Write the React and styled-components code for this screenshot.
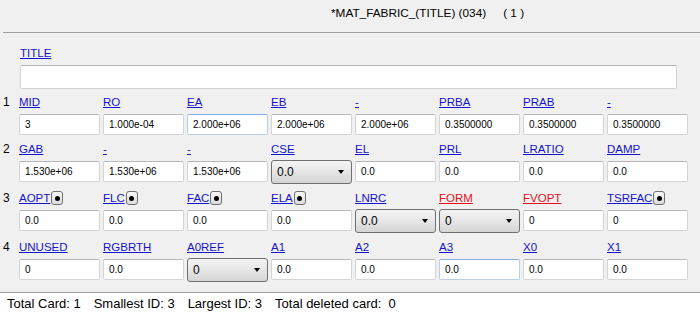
import React from 'react'
import styled, { createGlobalStyle } from 'styled-components'

const GlobalStyle = createGlobalStyle`
    body {
        margin: 0;
        background: #f0f0f0;
        font-family: "Liberation Sans", Arial, sans-serif;
    }
`

const Page = styled.div`
    width: 700px;
    height: 315px;
    overflow: hidden;
    display: flex;
    flex-direction: column;
`

const Header = styled.div`
    height: 33px;
    box-sizing: border-box;
    margin-left: 3px;
    padding: 5px 0 0 328px;
    border-bottom: 1px solid #a0a0a0;
    font-size: 11.8px;
    line-height: 16px;
    color: #000;
    white-space: pre;
`

const Count = styled.span`
    margin-left: 17px;
`

const TitleBlock = styled.div`
    padding: 10px 0 0 20px;
`

const LabelRow = styled.div`
    display: flex;
    align-items: center;
    gap: 1px;
    height: 20px;
    margin-bottom: 2px;
`

const FieldLabel = styled.a`
    color: ${props => props.$red ? '#e2101c' : '#1414c8'};
    text-decoration: underline;
    font-size: 11.5px;
    line-height: 20px;
    cursor: pointer;
`

const Toggle = styled.span`
    width: 12px;
    height: 14px;
    box-sizing: border-box;
    border: 1px solid #707070;
    border-radius: 3px;
    background: linear-gradient(#f8f8f8, #dcdcdc);
    display: flex;
    align-items: center;
    justify-content: center;

    &::after {
        content: '';
        width: 5px;
        height: 5px;
        border-radius: 50%;
        background: #000;
    }
`

const TitleInput = styled.input`
    width: 657px;
    height: 24px;
    box-sizing: border-box;
    border: 1px solid #d2d2d2;
    border-top-color: #b4b4b4;
    border-radius: 2px;
    background: #fff;
    outline: none;
`

const Grid = styled.div`
    display: flex;
    flex-direction: column;
    gap: 4px;
    margin-top: 3px;
`

const Row = styled.div`
    display: flex;
    align-items: flex-start;
`

const RowNum = styled.div`
    width: 19px;
    box-sizing: border-box;
    padding-left: 3px;
    font-size: 12px;
    line-height: 20px;
    color: #000;
`

const Cells = styled.div`
    display: grid;
    grid-template-columns: repeat(8, 81px);
    column-gap: 3px;
`

const Cell = styled.div`
    display: flex;
    flex-direction: column;
`

const Input = styled.input`
    width: 81px;
    height: 21px;
    box-sizing: border-box;
    padding: 0 5px;
    border: 1px solid ${props => props.$active ? '#b7d0e8' : '#d4d4d4'};
    border-top-color: ${props => props.$active ? '#86aee0' : '#b6b6b6'};
    border-radius: 2px;
    background: #fff;
    font-family: "Liberation Sans", Arial, sans-serif;
    font-size: 10px;
    color: #000;
    outline: none;
`

const Combo = styled.div`
    width: 81px;
    height: 24px;
    margin-top: -1px;
    box-sizing: border-box;
    padding-left: 5px;
    border: 1px solid #707070;
    border-radius: 3px;
    background: linear-gradient(#f4f4f4, #e6e6e6 50%, #d4d4d4);
    display: flex;
    align-items: center;
    justify-content: space-between;
    font-size: 12px;
    color: #000;

    &::after {
        content: '';
        margin-right: 7px;
        border-left: 3.5px solid transparent;
        border-right: 3.5px solid transparent;
        border-top: 4px solid #000;
    }
`

const Footer = styled.div`
    flex: 1;
    margin-top: 10px;
    border-top: 1px solid #a0a0a0;
    background: #fff;
    padding: 3px 0 0 7px;
    display: flex;
    gap: 13px;
    font-size: 13px;
    line-height: 16px;
    color: #000;
    white-space: pre;
`

const rows = [
    [
        { label: 'MID', value: '3' },
        { label: 'RO', value: '1.000e-04' },
        { label: 'EA', value: '2.000e+06', active: true },
        { label: 'EB', value: '2.000e+06' },
        { label: '-', value: '2.000e+06' },
        { label: 'PRBA', value: '0.3500000' },
        { label: 'PRAB', value: '0.3500000' },
        { label: '-', value: '0.3500000' },
    ],
    [
        { label: 'GAB', value: '1.530e+06' },
        { label: '-', value: '1.530e+06' },
        { label: '-', value: '1.530e+06' },
        { label: 'CSE', value: '0.0', combo: true },
        { label: 'EL', value: '0.0' },
        { label: 'PRL', value: '0.0' },
        { label: 'LRATIO', value: '0.0' },
        { label: 'DAMP', value: '0.0' },
    ],
    [
        { label: 'AOPT', value: '0.0', toggle: true },
        { label: 'FLC', value: '0.0', toggle: true },
        { label: 'FAC', value: '0.0', toggle: true },
        { label: 'ELA', value: '0.0', toggle: true },
        { label: 'LNRC', value: '0.0', combo: true },
        { label: 'FORM', value: '0', combo: true, red: true },
        { label: 'FVOPT', value: '0', red: true },
        { label: 'TSRFAC', value: '0', toggle: true },
    ],
    [
        { label: 'UNUSED', value: '0' },
        { label: 'RGBRTH', value: '0.0' },
        { label: 'A0REF', value: '0', combo: true },
        { label: 'A1', value: '0.0' },
        { label: 'A2', value: '0.0' },
        { label: 'A3', value: '0.0', active: true },
        { label: 'X0', value: '0.0' },
        { label: 'X1', value: '0.0' },
    ],
]

function Field({ field }) {
    return (
        <Cell>
            <LabelRow>
                <FieldLabel $red={field.red}>{field.label}</FieldLabel>
                {field.toggle ? <Toggle /> : null}
            </LabelRow>
            {field.combo
                ? <Combo>{field.value}</Combo>
                : <Input readOnly value={field.value} $active={field.active} />}
        </Cell>
    )
}

function App() {
    return (
        <Page>
            <GlobalStyle />
            <Header>
                *MAT_FABRIC_(TITLE) (034)<Count>( 1 )</Count>
            </Header>
            <TitleBlock>
                <LabelRow>
                    <FieldLabel>TITLE</FieldLabel>
                </LabelRow>
                <TitleInput readOnly value="" />
            </TitleBlock>
            <Grid>
                {rows.map((fields, i) => (
                    <Row key={i}>
                        <RowNum>{i + 1}</RowNum>
                        <Cells>
                            {fields.map((field, j) => <Field key={j} field={field} />)}
                        </Cells>
                    </Row>
                ))}
            </Grid>
            <Footer>
                <span>Total Card: 1</span>
                <span>Smallest ID: 3</span>
                <span>Largest ID: 3</span>
                <span>Total deleted card:  0</span>
            </Footer>
        </Page>
    )
}

export default App
